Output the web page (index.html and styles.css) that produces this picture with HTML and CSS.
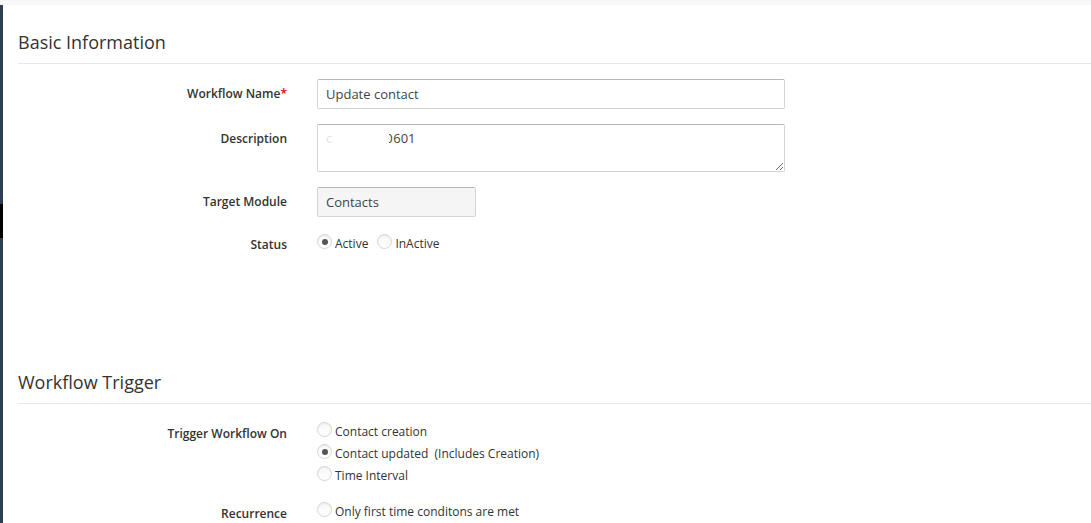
FILE: index.html
```html
<!DOCTYPE html>
<html lang="en">
<head>
    <meta charset="UTF-8">
    <title>Edit Workflow</title>
    <link rel="stylesheet" href="styles.css">
</head>
<body>
<div class="topbar"></div>
<div class="page">
    <div class="sidebar"><div class="sidebar-mark"></div></div>
    <div class="main">
        <h3 class="section-title">Basic Information</h3>
        <div class="form">
            <label class="label">Workflow Name<span class="req">*</span></label>
            <div class="field"><input class="input" type="text" value="Update contact"></div>

            <label class="label">Description</label>
            <div class="field"><div class="textarea"><span class="faint">c</span><span class="gap"></span><span class="half"><span>0</span></span>601</div></div>

            <label class="label">Target Module</label>
            <div class="field"><div class="input input-static">Contacts</div></div>

            <label class="label label-radio">Status</label>
            <div class="field field-inline">
                <span class="radio checked"></span><span class="radio-text">Active</span>
                <span class="radio"></span><span class="radio-text">InActive</span>
            </div>
        </div>

        <h3 class="section-title section-gap">Workflow Trigger</h3>
        <div class="form form-trigger">
            <label class="label label-radio">Trigger Workflow On</label>
            <div class="field field-stack">
                <div class="option"><span class="radio"></span><span class="radio-text">Contact creation</span></div>
                <div class="option"><span class="radio checked"></span><span class="radio-text">Contact updated&nbsp; (Includes Creation)</span></div>
                <div class="option"><span class="radio"></span><span class="radio-text">Time Interval</span></div>
            </div>

            <label class="label label-radio">Recurrence</label>
            <div class="field field-stack">
                <div class="option"><span class="radio"></span><span class="radio-text">Only first time conditons are met</span></div>
            </div>
        </div>
    </div>
</div>
</body>
</html>
```

FILE: styles.css
```css
html, body{
    margin: 0;
    padding: 0;
    background: #fff;
    font-family: "Open Sans", "Liberation Sans", sans-serif;
    color: #333;
}
.topbar{
    height: 5px;
    background: #f8f8f8;
}
.page{
    display: flex;
    height: 518px;
    overflow: hidden;
}
.sidebar{
    width: 3px;
    flex: none;
    background: #2c3e50;
    padding-top: 199px;
}
.sidebar-mark{
    height: 34px;
    background: #000;
}
.main{
    flex: 1;
    padding-left: 15px;
}
.section-title{
    margin: 0;
    padding: 25px 0 9px;
    font-size: 18px;
    font-weight: 400;
    line-height: 24px;
    color: #333;
    border-bottom: 1px solid #e8e8e8;
}
.section-gap{
    padding-top: 117px;
}
.form{
    display: grid;
    grid-template-columns: 269px 468px;
    column-gap: 30px;
    row-gap: 15px;
    padding-top: 15px;
    align-items: start;
}
.form-trigger{
    padding-top: 17px;
    row-gap: 14px;
}
.label{
    text-align: right;
    font-size: 12px;
    font-weight: 600;
    line-height: 16px;
    padding-top: 7px;
    color: #333;
}
.label-radio{
    padding-top: 5px;
}
.req{
    color: #e00;
}
.input{
    box-sizing: border-box;
    width: 100%;
    height: 30px;
    padding: 0 8px;
    border: 1px solid #d4d4d4;
    border-top-color: #b9b9b9;
    border-radius: 2px;
    font-family: "Open Sans", "Liberation Sans", sans-serif;
    font-size: 13px;
    line-height: 28px;
    color: #444;
    outline: none;
}
.input-static{
    width: 159px;
    background: #f5f5f5;
}
.textarea{
    box-sizing: border-box;
    width: 100%;
    height: 48px;
    padding: 3px 8px;
    border: 1px solid #d4d4d4;
    border-top-color: #b9b9b9;
    border-radius: 2px;
    font-size: 13px;
    line-height: 20px;
    color: #444;
    resize: vertical;
    overflow: auto;
    white-space: nowrap;
}
.faint{
    color: #e4e4e4;
}
.gap{
    display: inline-block;
    width: 57px;
}
.half{
    display: inline-block;
    width: 4px;
    overflow: hidden;
    vertical-align: top;
}
.half span{
    margin-left: -4px;
}
.field-inline{
    display: flex;
    align-items: center;
    padding-top: 4px;
    font-size: 12px;
}
.field-stack{
    display: flex;
    flex-direction: column;
    font-size: 12px;
}
.option{
    display: flex;
    align-items: center;
    height: 22px;
}
.radio{
    box-sizing: border-box;
    position: relative;
    width: 15px;
    height: 15px;
    margin-right: 3px;
    margin-top: -5px;
    border: 1px solid #d6d6d6;
    border-radius: 50%;
    background: linear-gradient(#f7f7f7, #fff);
    box-shadow: inset 0 1px 1px rgba(0,0,0,0.06);
    flex: none;
}
.radio.checked::after{
    content: "";
    position: absolute;
    left: 3.5px;
    top: 3.5px;
    width: 6px;
    height: 6px;
    border-radius: 50%;
    background: #555;
}
.radio-text{
    color: #333;
    line-height: 16px;
    margin-right: 9px;
}
```
